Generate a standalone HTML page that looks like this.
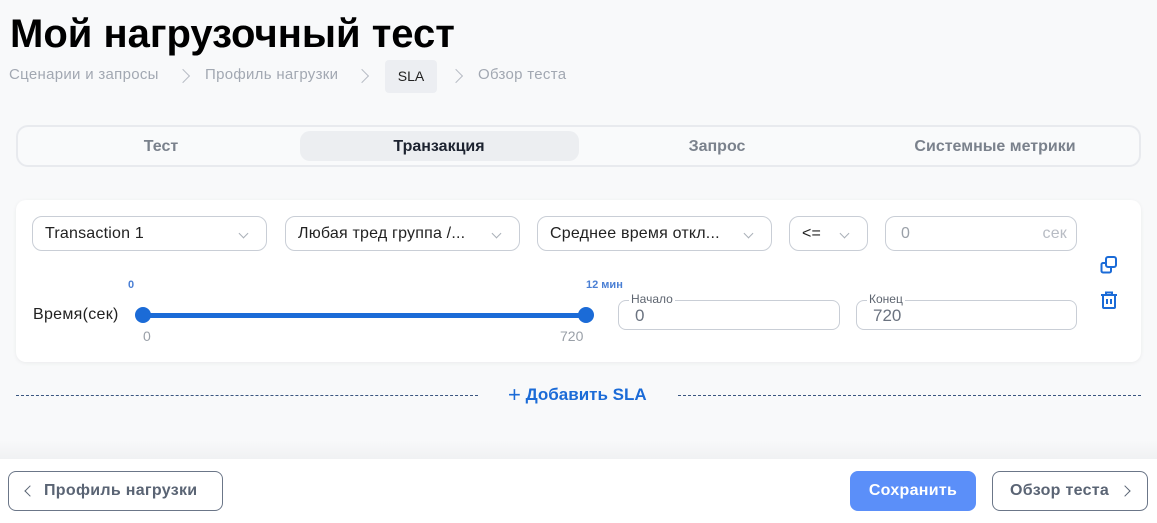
<!DOCTYPE html>
<html><head><meta charset="utf-8"><style>
*{box-sizing:border-box;margin:0;padding:0}
body{width:1157px;height:523px;background:#f8f9fa;font-family:"Liberation Sans",sans-serif;position:relative;overflow:hidden;color:#1d1f24}
.a{position:absolute}
.sel{position:absolute;top:216px;height:35px;border:1px solid #c9ced6;border-radius:10px;background:#fff;font-size:16px;line-height:33px;padding-left:12px;color:#222;letter-spacing:0.2px}
.chev{position:absolute;top:13px;width:7px;height:7px;border-right:1.3px solid #aab0b8;border-bottom:1.3px solid #aab0b8;transform:rotate(45deg)}
.tab{position:absolute;top:131px;height:30px;width:278px;text-align:center;line-height:30px;font-size:16px;font-weight:bold;color:#7a818c}
.bc{position:absolute;top:66px;font-size:15px;color:#a2a8b2;letter-spacing:0.3px}
.arr{position:absolute;top:71px;width:10px;height:10px;border-right:1.5px solid #b8bdc5;border-top:1.5px solid #b8bdc5;transform:rotate(45deg)}
.fld{position:absolute;top:300px;height:30px;border:1px solid #c9ced6;border-radius:8px;background:#fff;font-size:17px;color:#6b7380;padding:5px 0 0 16px;line-height:20px}
.fld span{position:absolute;top:-9px;left:10px;background:#fff;padding:0 2px;font-size:12px;color:#5e6570;line-height:14px}
.btn{position:absolute;top:471px;height:40px;border:1px solid #6b7688;border-radius:8px;background:#fff;font-size:16px;font-weight:bold;color:#5a6474;line-height:38px;letter-spacing:0.3px}
</style></head><body>
<div class="a" style="left:10px;top:12px;font-size:40px;font-weight:bold;color:#000;letter-spacing:0px">Мой нагрузочный тест</div>
<div class="bc" style="left:9px">Сценарии и запросы</div>
<div class="arr" style="left:178px"></div>
<div class="bc" style="left:205px">Профиль нагрузки</div>
<div class="arr" style="left:357px"></div>
<div class="a" style="left:385px;top:60px;width:52px;height:33px;background:#eceef2;border-radius:4px;font-size:14px;line-height:33px;text-align:center;color:#222">SLA</div>
<div class="arr" style="left:451px"></div>
<div class="bc" style="left:478px">Обзор теста</div>

<div class="a" style="left:16px;top:125px;width:1125px;height:42px;border:2px solid #e8eaee;border-radius:12px;background:#f9fafb"></div>
<div class="a" style="left:300px;top:131px;width:279px;height:30px;background:#eceef1;border-radius:10px"></div>
<div class="tab" style="left:22px;top:132px">Тест</div>
<div class="tab" style="left:300px;top:132px;color:#1d2330">Транзакция</div>
<div class="tab" style="left:578px;top:132px">Запрос</div>
<div class="tab" style="left:856px;top:132px">Системные метрики</div>

<div class="a" style="left:16px;top:200px;width:1125px;height:162px;background:#fff;border-radius:10px;box-shadow:0 1px 4px rgba(0,0,0,.06)"></div>
<div class="sel" style="left:32px;width:235px">Transaction 1<div class="chev" style="left:207px"></div></div>
<div class="sel" style="left:285px;width:235px">Любая тред группа /...<div class="chev" style="left:207px"></div></div>
<div class="sel" style="left:537px;width:235px">Среднее время откл...<div class="chev" style="left:207px"></div></div>
<div class="sel" style="left:789px;width:79px">&lt;=<div class="chev" style="left:51px"></div></div>
<div class="sel" style="left:885px;width:192px;color:#9aa0a8;padding-left:15px">0<span style="position:absolute;right:9px;color:#b8bcc4">сек</span></div>

<div class="a" style="left:33px;top:306px;font-size:16px;color:#222;letter-spacing:0.3px">Время(сек)</div>
<div class="a" style="left:128px;top:279px;font-size:11px;font-weight:bold;color:#4a7fd4">0</div>
<div class="a" style="left:586px;top:279px;font-size:11px;font-weight:bold;color:#4a7fd4">12 мин</div>
<div class="a" style="left:143px;top:313px;width:443px;height:5px;background:#1b6bd7"></div>
<div class="a" style="left:135px;top:307px;width:16px;height:16px;border-radius:50%;background:#1b6bd7"></div>
<div class="a" style="left:578px;top:307px;width:16px;height:16px;border-radius:50%;background:#1b6bd7"></div>
<div class="a" style="left:143px;top:328px;font-size:14px;color:#9aa0a8">0</div>
<div class="a" style="left:560px;top:328px;font-size:14px;color:#9aa0a8">720</div>
<div class="fld" style="left:618px;width:222px"><span>Начало</span>0</div>
<div class="fld" style="left:856px;width:221px"><span>Конец</span>720</div>

<svg class="a" style="left:1099px;top:255px" width="20" height="20" viewBox="0 0 20 20" fill="none" stroke="#1b6bd7" stroke-width="2"><rect x="7" y="2" width="10" height="10" rx="2"/><path d="M7 8H4a1.5 1.5 0 0 0-1.5 1.5V16A1.5 1.5 0 0 0 4 17.5h6.5A1.5 1.5 0 0 0 12 16v-4"/></svg>
<svg class="a" style="left:1099px;top:290px" width="20" height="20" viewBox="0 0 20 20" fill="none" stroke="#1b6bd7" stroke-width="2"><path d="M2 5h16M7 5V2.5h6V5M4 5v12a1 1 0 0 0 1 1h10a1 1 0 0 0 1-1V5M8 9v5M12 9v5"/></svg>

<div class="a" style="left:16px;top:395px;width:462px;border-top:1px dashed #3a5680"></div>
<div class="a" style="left:678px;top:395px;width:463px;border-top:1px dashed #3a5680"></div>
<div class="a" style="left:508px;top:385px;font-size:17px;font-weight:bold;color:#1b6bd7"><span style="font-size:22px;font-weight:normal;line-height:16px;position:relative;top:2px">+</span> Добавить SLA</div>

<div class="a" style="left:0;top:440px;width:1157px;height:19px;background:linear-gradient(#f8f9fa,#f0f1f3)"></div>
<div class="a" style="left:0;top:459px;width:1157px;height:64px;background:#fff"></div>
<div class="btn" style="left:8px;width:215px;padding-left:35px">Профиль нагрузки</div>
<div class="a" style="left:26px;top:487px;width:8px;height:8px;border-left:1.5px solid #5a6474;border-bottom:1.5px solid #5a6474;transform:rotate(45deg)"></div>
<div class="btn" style="left:850px;width:126px;background:#5b8ff9;border-color:#5b8ff9;color:#fff;text-align:center">Сохранить</div>
<div class="btn" style="left:992px;width:156px;padding-left:17px">Обзор теста</div>
<div class="a" style="left:1121px;top:487px;width:8px;height:8px;border-right:1.5px solid #5a6474;border-top:1.5px solid #5a6474;transform:rotate(45deg)"></div>
</body></html>
